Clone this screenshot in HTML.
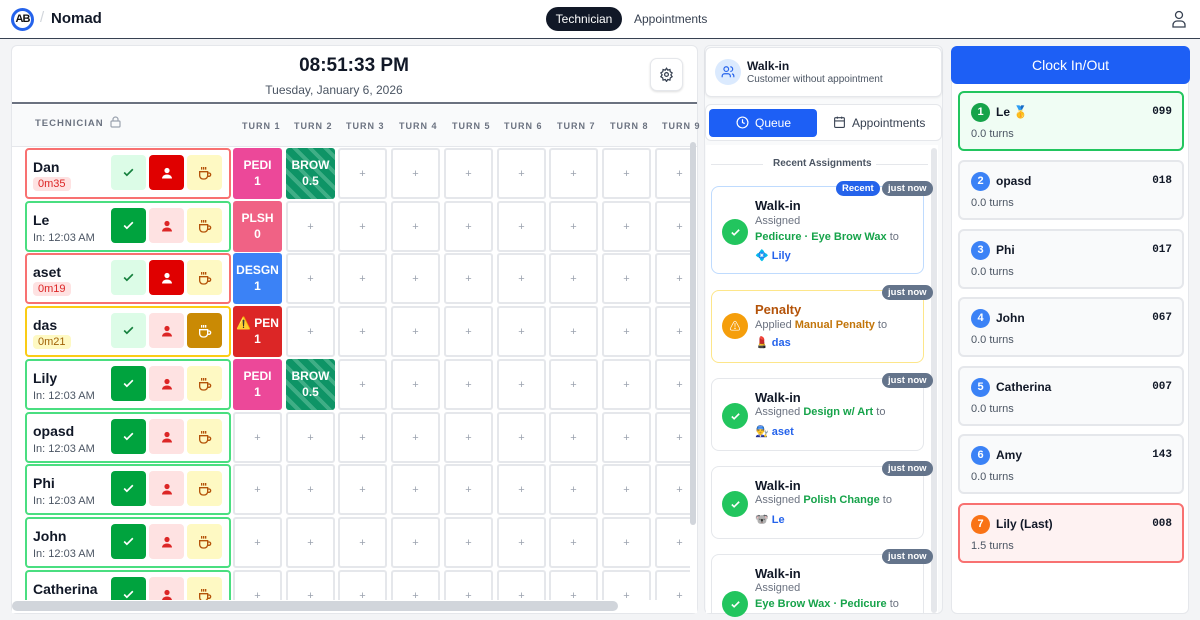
<!DOCTYPE html>
<html><head><meta charset="utf-8"><style>
*{box-sizing:border-box;margin:0;padding:0}
body{width:1200px;height:620px;overflow:hidden;background:#f3f4f6;font-family:"Liberation Sans","Noto Sans CJK SC",sans-serif;color:#111827;position:relative}
.a{position:absolute}
.hdr{left:0;top:0;width:1200px;height:39px;background:#fff;border-bottom:1.5px solid #374151}
.panel{background:#fff;border:1px solid #e5e7eb;border-radius:6px}
.tc{position:absolute;left:25px;width:206px;height:51px;border:2px solid;border-radius:4px;background:#fff}
.tc .n{position:absolute;left:6px;top:9px;font-size:14px;font-weight:bold;color:#111827}
.tc .s{position:absolute;left:6px;top:29px;font-size:11px;color:#4b5563}
.tc .b{position:absolute;left:6px;top:27px;font-size:11px;padding:1px 5px;border-radius:4px}
.btn{position:absolute;top:5px;width:35px;height:35px;border-radius:4px;display:flex;align-items:center;justify-content:center}
.cell{position:absolute;width:49px;height:51px;border:2px solid #e5e7eb;border-radius:3px;background:#fff;color:#9ca3af;font-size:11px;display:flex;align-items:center;justify-content:center}
.tk{position:absolute;width:49px;height:51px;border-radius:3px;color:#fff;font-size:12px;font-weight:bold;text-align:center;line-height:16px;padding-top:9px}
.stripe{background:repeating-linear-gradient(45deg,#0e9466 0 7px,#3fae86 7px 11px)}
.th{position:absolute;top:121px;font-size:9px;color:#6b7280;letter-spacing:1px;font-weight:bold}
.rc{position:absolute;left:958px;width:226px;height:60px;border:2px solid #e5e7eb;border-radius:6px;background:#f9fafb}
.rc .num{position:absolute;left:11px;top:10px;width:19px;height:19px;border-radius:50%;background:#3b82f6;color:#fff;font-size:11px;font-weight:bold;text-align:center;line-height:19px}
.rc .nm{position:absolute;left:36px;top:12px;font-size:12px;font-weight:bold}
.rc .cd{position:absolute;right:10px;top:13px;font-size:11px;font-weight:bold;font-family:"Liberation Mono",monospace}
.rc .t{position:absolute;left:11px;top:35px;font-size:11px;color:#4b5563}
.ac{position:absolute;left:711px;width:213px;border:1.5px solid #e5e7eb;border-radius:8px;background:#fff}
.ac .ic{position:absolute;left:10px;width:26px;height:26px;border-radius:50%;background:#22c55e;display:flex;align-items:center;justify-content:center}
.ac .ti{position:absolute;left:43px;font-size:13px;font-weight:bold}
.ac .l2{position:absolute;left:43px;font-size:11px;color:#6b7280}
.ac .l3{position:absolute;left:43px;font-size:11px;font-weight:bold;color:#2563eb}
.pill{position:absolute;height:15px;border-radius:8px;font-size:9.5px;color:#fff;font-weight:bold;line-height:15px;padding:0 6px}
.g{color:#16a34a;font-weight:bold}
</style></head><body>
<div class="a hdr">
 <div class="a" style="left:11px;top:8px;width:23px;height:23px;border-radius:50%;border:3px solid #2563eb;background:#fff;font-size:11px;font-weight:bold;text-align:center;line-height:17px;color:#111;letter-spacing:-1px">AB</div>
 <div class="a" style="left:40px;top:9px;font-size:15px;color:#d1d5db">/</div>
 <div class="a" style="left:51px;top:10px;font-size:15px;font-weight:bold;color:#111827">Nomad</div>
 <div class="a" style="left:546px;top:7px;width:76px;height:24px;border-radius:12px;background:#111827;color:#fff;font-size:12px;text-align:center;line-height:24px">Technician</div>
 <div class="a" style="left:634px;top:12px;font-size:12px;color:#374151">Appointments</div>
 <svg class="a" style="left:1171px;top:10px" width="16" height="18" viewBox="0 0 16 18" fill="none" stroke="#374151" stroke-width="1.3"><circle cx="8" cy="5" r="3.5"/><path d="M2 17v-2a4 4 0 0 1 4-4h4a4 4 0 0 1 4 4v2z"/></svg>
</div>

<div class="a panel" style="left:11px;top:45px;width:687px;height:569px;overflow:hidden">
 <div class="a" style="left:0;top:0;width:687px;height:58px;border-bottom:2px solid #6b7280"></div>
 <div class="a" style="left:0;top:59px;width:687px;height:42px;background:#f9fafb;border-bottom:1px solid #e5e7eb"></div>
</div>
<div class="a" style="left:0;top:55px;width:708px;text-align:center;font-size:19px;font-weight:bold;color:#111827">08:51:33 PM</div>
<div class="a" style="left:0;top:83px;width:668px;text-align:center;font-size:12px;color:#4b5563">Tuesday, January 6, 2026</div>
<div class="a" style="left:650px;top:58px;width:33px;height:33px;border:1px solid #e5e7eb;border-radius:7px;background:#fff;box-shadow:0 1px 2px #0002"></div>
<svg class="a" style="left:659px;top:67px" width="15" height="15" viewBox="0 0 24 24" fill="none" stroke="#374151" stroke-width="2"><circle cx="12" cy="12" r="3"/><path d="M12 2l2 3 3.5-1 .5 3.5 3 2-2 3 2 3-3 2-.5 3.5-3.5-1-2 3-2-3-3.5 1-.5-3.5-3-2 2-3-2-3 3-2 .5-3.5 3.5 1z"/></svg>
<div class="th" style="left:35px;top:118px;font-size:9.5px">TECHNICIAN</div>
<svg class="a" style="left:110px;top:116px" width="11" height="12" viewBox="0 0 11 12" fill="none" stroke="#9ca3af" stroke-width="1.2"><rect x="1" y="5" width="9" height="6" rx="1"/><path d="M3 5V3.5a2.5 2.5 0 0 1 5 0V5"/></svg>
<div class="th" style="left:242px">TURN 1</div><div class="th" style="left:294px">TURN 2</div><div class="th" style="left:346px">TURN 3</div><div class="th" style="left:399px">TURN 4</div><div class="th" style="left:452px">TURN 5</div><div class="th" style="left:504px">TURN 6</div><div class="th" style="left:557px">TURN 7</div><div class="th" style="left:610px">TURN 8</div><div class="th" style="left:662px">TURN 9</div>

<div id="grid" class="a" style="left:0;top:0;width:690px;height:600px;overflow:hidden">
<div id="cells"></div>
</div>

<div class="tc" style="top:148px;border-color:#f87171"><div class="n">Dan</div><div class="b" style="background:#fee2e2;color:#dc2626">0m35</div>
 <div class="btn" style="left:84px;background:#dcfce7"></div><div class="btn" style="left:122px;background:#e00000"></div><div class="btn" style="left:160px;background:#fef9c3"></div></div>
<div class="tc" style="top:201px;border-color:#4ade80"><div class="n">Le</div><div class="s">In: 12:03 AM</div>
 <div class="btn" style="left:84px;background:#00a33e"></div><div class="btn" style="left:122px;background:#fee2e2"></div><div class="btn" style="left:160px;background:#fef9c3"></div></div>
<div class="tc" style="top:253px;border-color:#f87171"><div class="n">aset</div><div class="b" style="background:#fee2e2;color:#dc2626">0m19</div>
 <div class="btn" style="left:84px;background:#dcfce7"></div><div class="btn" style="left:122px;background:#e00000"></div><div class="btn" style="left:160px;background:#fef9c3"></div></div>
<div class="tc" style="top:306px;border-color:#facc15"><div class="n">das</div><div class="b" style="background:#fef9c3;color:#a16207">0m21</div>
 <div class="btn" style="left:84px;background:#dcfce7"></div><div class="btn" style="left:122px;background:#fee2e2"></div><div class="btn" style="left:160px;background:#ca8a04"></div></div>
<div class="tc" style="top:359px;border-color:#4ade80"><div class="n">Lily</div><div class="s">In: 12:03 AM</div>
 <div class="btn" style="left:84px;background:#00a33e"></div><div class="btn" style="left:122px;background:#fee2e2"></div><div class="btn" style="left:160px;background:#fef9c3"></div></div>
<div class="tc" style="top:412px;border-color:#4ade80"><div class="n">opasd</div><div class="s">In: 12:03 AM</div>
 <div class="btn" style="left:84px;background:#00a33e"></div><div class="btn" style="left:122px;background:#fee2e2"></div><div class="btn" style="left:160px;background:#fef9c3"></div></div>
<div class="tc" style="top:464px;border-color:#4ade80"><div class="n">Phi</div><div class="s">In: 12:03 AM</div>
 <div class="btn" style="left:84px;background:#00a33e"></div><div class="btn" style="left:122px;background:#fee2e2"></div><div class="btn" style="left:160px;background:#fef9c3"></div></div>
<div class="tc" style="top:517px;border-color:#4ade80"><div class="n">John</div><div class="s">In: 12:03 AM</div>
 <div class="btn" style="left:84px;background:#00a33e"></div><div class="btn" style="left:122px;background:#fee2e2"></div><div class="btn" style="left:160px;background:#fef9c3"></div></div>
<div class="tc" style="top:570px;height:32px;border-bottom:none;border-radius:4px 4px 0 0;overflow:hidden;border-color:#4ade80"><div class="n">Catherina</div><div class="s">In: 12:03 AM</div>
 <div class="btn" style="left:84px;background:#00a33e"></div><div class="btn" style="left:122px;background:#fee2e2"></div><div class="btn" style="left:160px;background:#fef9c3"></div></div>

<div class="a" style="left:12px;top:600px;width:685px;height:13px;background:#fff"></div>
<div class="a" style="left:12px;top:601px;width:606px;height:10px;border-radius:5px;background:#d1d5db"></div>
<div class="a" style="left:690px;top:142px;width:6px;height:383px;border-radius:3px;background:#d1d5db"></div>

<div class="a panel" style="left:704px;top:45px;width:239px;height:569px;background:#f9fafb"></div>
<div class="a" style="left:705px;top:47px;width:237px;height:50px;border:1.5px solid #e5e7eb;border-radius:6px;background:#fff;box-shadow:0 1px 2px #0001"></div>
<div class="a" style="left:715px;top:59px;width:26px;height:26px;border-radius:50%;background:#dbeafe"></div>
<svg class="a" style="left:721px;top:65px" width="14" height="14" viewBox="0 0 24 24" fill="none" stroke="#2563eb" stroke-width="2"><circle cx="9" cy="7" r="4"/><path d="M2 21v-2a4 4 0 0 1 4-4h6a4 4 0 0 1 4 4v2M16 3a4 4 0 0 1 0 8M22 21v-2a4 4 0 0 0-3-3.9"/></svg>
<div class="a" style="left:747px;top:59px;font-size:12px;font-weight:bold">Walk-in</div>
<div class="a" style="left:747px;top:74px;font-size:10px;color:#4b5563">Customer without appointment</div>
<div class="a" style="left:705px;top:104px;width:237px;height:37px;border:1.5px solid #e5e7eb;border-radius:6px;background:#fff"></div>
<div class="a" style="left:709px;top:109px;width:108px;height:28px;border-radius:4px;background:#1d5ff5"></div>
<svg class="a" style="left:736px;top:116px" width="13" height="13" viewBox="0 0 24 24" fill="none" stroke="#fff" stroke-width="2.2"><circle cx="12" cy="12" r="10"/><path d="M12 6v6l4 2"/></svg>
<div class="a" style="left:755px;top:116px;font-size:12px;color:#fff">Queue</div>
<svg class="a" style="left:833px;top:115px" width="13" height="14" viewBox="0 0 24 24" fill="none" stroke="#374151" stroke-width="2"><rect x="3" y="4" width="18" height="18" rx="2"/><path d="M16 2v4M8 2v4M3 10h18"/></svg>
<div class="a" style="left:852px;top:116px;font-size:12px;color:#374151">Appointments</div>
<div class="a" style="left:706px;top:145px;width:232px;height:468px;background:#fff"></div>
<div class="a" style="left:931px;top:148px;width:6px;height:465px;border-radius:3px;background:#e5e7eb"></div>
<div class="a" style="left:711px;top:164px;width:52px;height:1px;background:#e5e7eb"></div>
<div class="a" style="left:876px;top:164px;width:52px;height:1px;background:#e5e7eb"></div>
<div class="a" style="left:773px;top:158px;font-size:10px;color:#4b5563;font-weight:bold">Recent Assignments</div>

<div class="ac" style="top:186px;height:88px;border-color:#bfdbfe"><div class="ic ck" style="top:32px"></div>
 <div class="ti" style="top:11px">Walk-in</div><div class="l2" style="top:28px">Assigned</div><div class="l2" style="top:44px"><span class="g">Pedicure · Eye Brow Wax</span> to</div><div class="l3" style="top:62px">💠 Lily</div></div>
<div class="pill" style="left:836px;top:181px;background:#2563eb">Recent</div>
<div class="pill" style="left:882px;top:181px;background:#64748b">just now</div>

<div class="ac" style="top:290px;height:73px;border-color:#fde68a"><div class="ic" style="top:22px;background:#f59e0b"><span style="color:#fff;font-size:11px">⚠</span></div>
 <div class="ti" style="top:11px;color:#b45309">Penalty</div><div class="l2" style="top:28px">Applied <span style="color:#c2750a;font-weight:bold">Manual Penalty</span> to</div><div class="l3" style="top:45px">💄 das</div></div>
<div class="pill" style="left:882px;top:285px;background:#64748b">just now</div>

<div class="ac" style="top:378px;height:73px"><div class="ic ck" style="top:24px"></div>
 <div class="ti" style="top:11px">Walk-in</div><div class="l2" style="top:27px">Assigned <span class="g">Design w/ Art</span> to</div><div class="l3" style="top:46px">👨‍🔧 aset</div></div>
<div class="pill" style="left:882px;top:373px;background:#64748b">just now</div>

<div class="ac" style="top:466px;height:73px"><div class="ic ck" style="top:24px"></div>
 <div class="ti" style="top:11px">Walk-in</div><div class="l2" style="top:27px">Assigned <span class="g">Polish Change</span> to</div><div class="l3" style="top:46px">🐨 Le</div></div>
<div class="pill" style="left:882px;top:461px;background:#64748b">just now</div>

<div class="ac" style="top:554px;height:59px;border-bottom:none;border-radius:8px 8px 0 0"><div class="ic ck" style="top:36px"></div>
 <div class="ti" style="top:11px">Walk-in</div><div class="l2" style="top:27px">Assigned</div><div class="l2" style="top:43px"><span class="g">Eye Brow Wax · Pedicure</span> to</div></div>
<div class="pill" style="left:882px;top:549px;background:#64748b">just now</div>

<div class="a panel" style="left:951px;top:46px;width:238px;height:568px"></div>
<div class="a" style="left:951px;top:46px;width:239px;height:38px;border-radius:6px;background:#1d5ff5;color:#fff;font-size:14px;text-align:center;line-height:38px">Clock In/Out</div>
<div class="rc" style="top:91px;background:#f0fdf4;border-color:#22c55e"><div class="num" style="background:#16a34a">1</div><div class="nm">Le 🥇</div><div class="cd">099</div><div class="t">0.0 turns</div></div>
<div class="rc" style="top:160px"><div class="num">2</div><div class="nm">opasd</div><div class="cd">018</div><div class="t">0.0 turns</div></div>
<div class="rc" style="top:229px"><div class="num">3</div><div class="nm">Phi</div><div class="cd">017</div><div class="t">0.0 turns</div></div>
<div class="rc" style="top:297px"><div class="num">4</div><div class="nm">John</div><div class="cd">067</div><div class="t">0.0 turns</div></div>
<div class="rc" style="top:366px"><div class="num">5</div><div class="nm">Catherina</div><div class="cd">007</div><div class="t">0.0 turns</div></div>
<div class="rc" style="top:434px"><div class="num">6</div><div class="nm">Amy</div><div class="cd">143</div><div class="t">0.0 turns</div></div>
<div class="rc" style="top:503px;background:#fef2f2;border-color:#f87171"><div class="num" style="background:#f97316">7</div><div class="nm">Lily (Last)</div><div class="cd">008</div><div class="t">1.5 turns</div></div>

<script>
var rows=[148,201,253,306,359,412,464,517,570];
var filled={"0,0":["PEDI","1","#ec4899"],"0,1":["BROW","0.5","s"],"1,0":["PLSH","0","#f06285"],"2,0":["DESGN","1","#3b82f6"],"3,0":["⚠️ PEN","1","#dc2626"],"4,0":["PEDI","1","#ec4899"],"4,1":["BROW","0.5","s"]};
var h="";
for(var r=0;r<9;r++)for(var c=0;c<9;c++){
 var x=Math.round(233+c*52.7),y=rows[r],f=filled[r+","+c];
 if(f){h+='<div class="tk'+(f[2]=="s"?" stripe":"")+'" style="left:'+x+'px;top:'+y+'px;'+(f[2]!="s"?"background:"+f[2]:"")+'">'+f[0]+'<br>'+f[1]+'</div>';}
 else h+='<div class="cell" style="left:'+x+'px;top:'+y+'px">+</div>';
}
document.getElementById("cells").innerHTML=h;
var person='<svg width="12" height="12" viewBox="0 0 12 12"><circle cx="6" cy="3.5" r="2.6" fill="C"/><path d="M1 11.5a5 4 0 0 1 10 0z" fill="C"/></svg>';
var cup='<svg width="16" height="16" viewBox="0 0 24 24" fill="none" stroke="C" stroke-width="2"><path d="M4 10h12v6a5 5 0 0 1-5 5H9a5 5 0 0 1-5-5z M16 12h2a2.5 2.5 0 0 1 0 5h-2 M7 3v4 M10 3v4 M13 3v4"/></svg>';
var chk='<svg width="13" height="13" viewBox="0 0 24 24" fill="none" stroke="C" stroke-width="3"><path d="M4 12l5 5L20 6"/></svg>';
document.querySelectorAll(".tc").forEach(function(t){
 var b=t.querySelectorAll(".btn");
 var dark=function(e){var bg=e.style.background;return bg.indexOf("rgb(0, 163")>=0||bg.indexOf("rgb(224")>=0||bg.indexOf("rgb(202")>=0;};
 b[0].innerHTML=chk.replace(/C/g,dark(b[0])?"#fff":"#15803d");
 b[1].innerHTML=person.replace(/"C"/g,dark(b[1])?'"#fff"':'"#dc2626"');
 b[2].innerHTML=cup.replace(/"C"/g,dark(b[2])?'"#fff"':'"#b45309"');
});
document.querySelectorAll(".ck").forEach(function(e){e.innerHTML='<svg width="11" height="11" viewBox="0 0 24 24" fill="none" stroke="#fff" stroke-width="3.5"><path d="M4 12l5 5L20 6"/></svg>';});
</script>
</body></html>
